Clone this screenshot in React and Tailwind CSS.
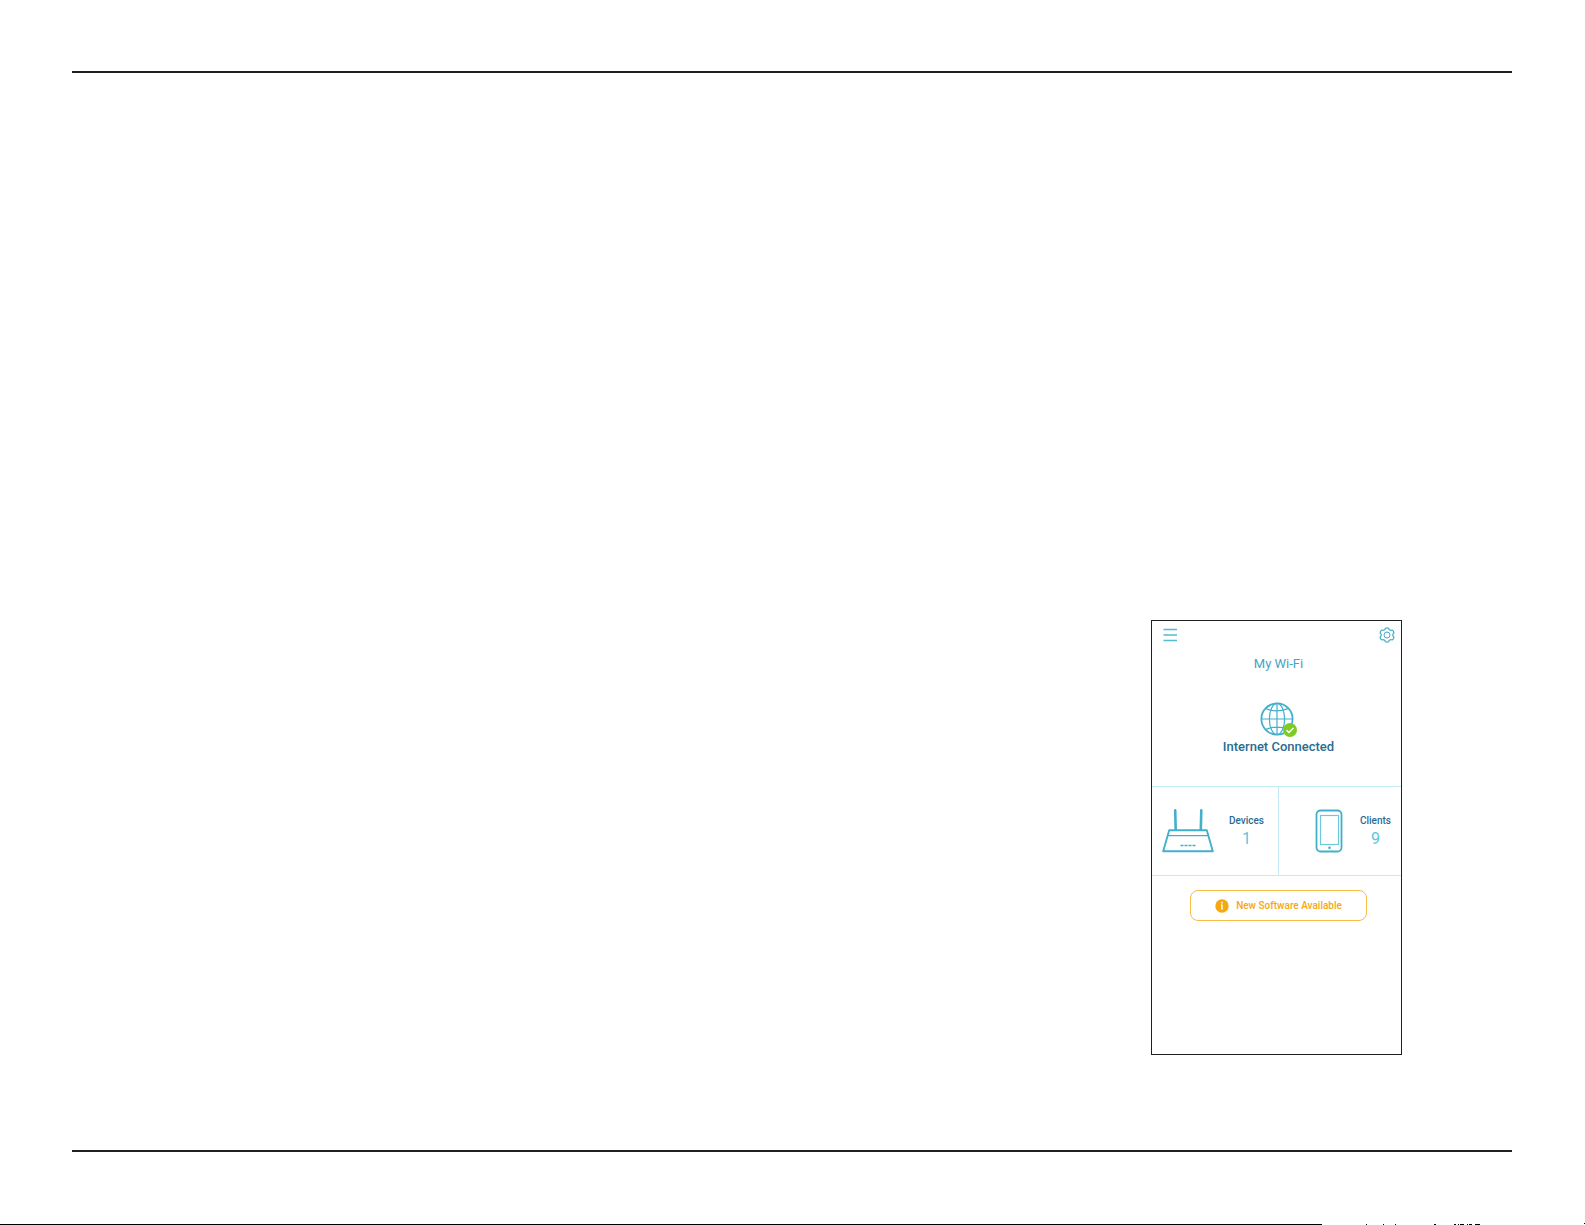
import React from 'react';

function GlobeIcon() {
  return (
    <svg viewBox="0 0 34 34" className="w-[34px] h-[34px]" fill="none" stroke="#43b0cb">
      <circle cx="17" cy="17" r="15.6" strokeWidth="1.8" />
      <ellipse cx="17" cy="17" rx="7.6" ry="15.6" strokeWidth="1.2" />
      <path d="M17 1.4v31.2M1.4 17h31.2M5.6 6.4c6 3.2 16.8 3.2 22.8 0M5.6 27.6c6-3.2 16.8-3.2 22.8 0" strokeWidth="1.2" />
    </svg>
  );
}

function CheckBadge() {
  return (
    <svg viewBox="0 0 14 14" className="absolute left-[23px] top-[21px] w-[14px] h-[14px]">
      <circle cx="7" cy="7" r="7" fill="#7fcb26" />
      <path d="M3.6 7.2l2.3 2.3 4.5-4.5" fill="none" stroke="#fff" strokeWidth="1.4" />
    </svg>
  );
}

function GearIcon() {
  return (
    <svg viewBox="0 0 16 16" className="w-4 h-4" fill="none" stroke="#43aac6" strokeWidth="1.2" strokeLinejoin="round">
      <path d="M6.3 1.2Q8 .5 9.7 1.2Q9.9 2.9 11 3.1Q11.9 3.6 13.2 3Q14.9 4.1 14.9 6Q13.7 7 13.7 8Q13.7 9 14.9 10Q14.9 11.9 13.2 13Q11.9 12.4 11 12.9Q9.9 13.1 9.7 14.8Q8 15.5 6.3 14.8Q6.1 13.1 5 12.9Q4.1 12.4 2.8 13Q1.1 11.9 1.1 10Q2.3 9 2.3 8Q2.3 7 1.1 6Q1.1 4.1 2.8 3Q4.1 3.6 5 3.1Q6.1 2.9 6.3 1.2z" />
      <circle cx="8" cy="8" r="3" strokeWidth="1" />
    </svg>
  );
}

function RouterIcon() {
  return (
    <svg viewBox="0 0 52 44" className="w-[52px] h-11" fill="none" stroke="#43b0cb">
      <path d="M13.2 1.400l.5 19.500M39.300 1.400l-.5 19.500" strokeWidth="2.6" strokeLinecap="round" />
      <path d="M7.2 21.300h37.600l6 21H1.200z" strokeWidth="1.9" strokeLinejoin="round" fill="#fff" />
      <path d="M6 26.700h40" strokeWidth="1.3" />
      <path d="M18.500 36.500h15" strokeWidth="1.3" strokeDasharray="3 1" />
    </svg>
  );
}

function PhoneIcon() {
  return (
    <svg viewBox="0 0 28 44" className="w-7 h-11" fill="none" stroke="#43b0cb">
      <rect x="1.5" y="1.5" width="25" height="41" rx="4" strokeWidth="1.8" />
      <rect x="5.5" y="6.5" width="18" height="29" stroke="#6fc9dd" strokeWidth="1.2" />
      <circle cx="14.5" cy="38.8" r="1.3" fill="#43b0cb" stroke="none" />
    </svg>
  );
}

function InfoIcon() {
  return (
    <svg viewBox="0 0 14 14" className="w-[14px] h-[14px]">
      <circle cx="7" cy="7" r="6.7" fill="#f5a80f" />
      <path d="M7 5.800v4.700M6 6.100h1" fill="none" stroke="#fff" strokeWidth="1.5" />
      <circle cx="7" cy="3.7" r=".9" fill="#fff" />
    </svg>
  );
}

// thin strip of print marks at the foot of the sheet
function FootMarks() {
  return (
    <svg viewBox="0 0 263 2" className="w-[263px] h-0.5 shrink-0" shapeRendering="crispEdges">
      <path d="M44 1h1v1h-1zM61 1h1v1h-1zM73 1h1v1h-1zM112 1h2v1h-2zM132 1h2v1h-2zM136 1h1v1h-1zM138 1h4v1h-4zM145 1h1v1h-1zM147 1h3v1h-3zM153 1h5v1h-5zM262 0h1v1h-1z" fill="#000" />
    </svg>
  );
}

function Stat({ label, value }) {
  return (
    <div className="flex flex-col items-center gap-0.5 pt-0.5">
      <span className="text-[10px] leading-3 font-medium text-[#2a6c91]">{label}</span>
      <span className="text-base leading-5 text-[#5cc6dc]">{value}</span>
    </div>
  );
}

function WifiPanel() {
  return (
    <section className="w-[251px] min-h-[435px] border border-[#231f20] bg-white">
      <div className="flex items-center justify-between pl-[11px] pr-1.5 pt-1.5">
        <button aria-label="Menu" className="cursor-pointer">
          <svg viewBox="0 0 16 16" className="w-4 h-4" stroke="#55b9d0" strokeWidth="1.5">
            <path d="M.5 2.5H14M.5 8H14M.5 13.5H14" />
          </svg>
        </button>
        <button aria-label="Settings" className="cursor-pointer">
          <GearIcon />
        </button>
      </div>

      <div className="flex flex-col items-center pl-1 pt-[11px]">
        <h1 className="text-[13px] leading-5 text-[#43a5c2]">My Wi-Fi</h1>
        <div className="relative mt-7 mr-1">
          <GlobeIcon />
          <CheckBadge />
        </div>
        <p className="mt-px text-[13px] leading-5 font-medium text-[#2a6c91]">Internet Connected</p>
      </div>

      <div className="mt-[29px] grid h-[90px] grid-cols-[127px_1fr] border-y border-[#c3ebf5]">
        <a href="#devices" className="flex items-center justify-between border-r border-[#c3ebf5] pl-2.5 pr-3.5">
          <RouterIcon />
          <Stat label="Devices" value="1" />
        </a>
        <a href="#clients" className="flex items-center justify-between pl-9 pr-2.5">
          <PhoneIcon />
          <Stat label="Clients" value="9" />
        </a>
      </div>

      <div className="mt-3.5 pl-[38px] pr-[34px]">
        <button className="flex h-[31px] w-full items-center justify-center gap-[7px] rounded-lg border border-[#f9bd45] text-[10px] font-medium text-[#f5a80f] cursor-pointer">
          <InfoIcon />
          New Software Available
        </button>
      </div>
    </section>
  );
}

export default function App() {
  return (
    <div className="min-h-screen flex flex-col bg-white font-[Roboto,sans-serif]">
      <div className="flex flex-1 flex-col pl-[72px] pr-[73px] pt-[71px] pb-[71px]">
        <main className="flex flex-1 items-end justify-end border-y-2 border-[#231f20] pr-[110px] pb-[95px]">
          <WifiPanel />
        </main>
      </div>
      <div className="flex items-end">
        <div className="h-px flex-1 bg-black" />
        <FootMarks />
      </div>
    </div>
  );
}
